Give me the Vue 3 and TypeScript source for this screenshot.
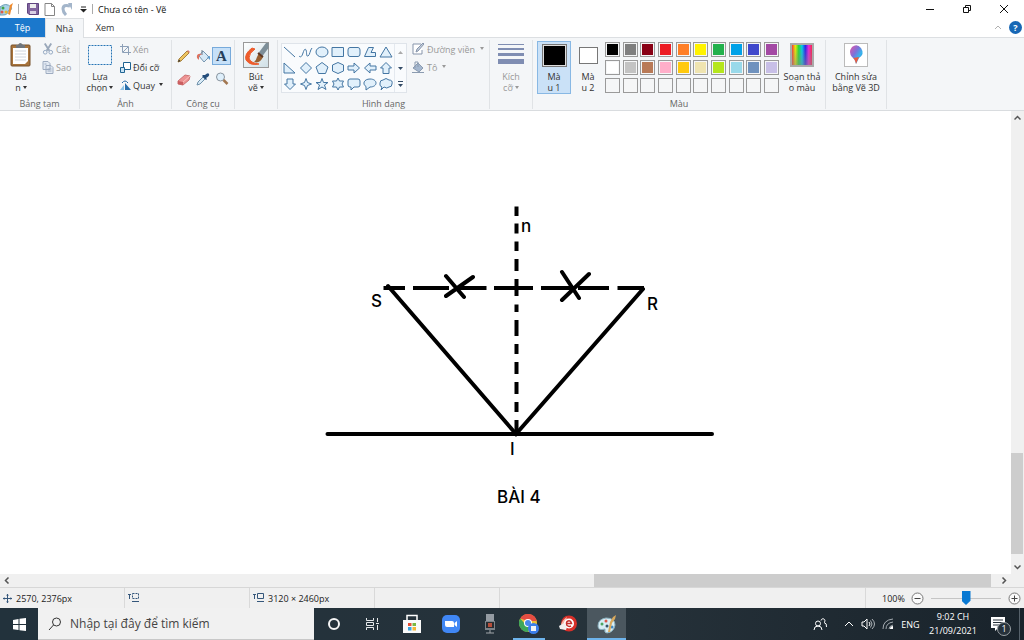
<script setup lang="ts">
import { ref } from 'vue'

const shapes: string[] = [
  'M2 2L13 12',
  'M1 11C3 13 4 11 5 8S7 3 8 5s0 7 2 6 2-6 4-8',
  'M2 7a6 5 0 1 0 12 0a6 5 0 1 0-12 0z',
  'M2 2.500H13.500V11.500H2z',
  'M4 2.500H12Q14 2.500 14 5V9Q14 11.500 12 11.500H4Q2 11.500 2 9V5Q2 2.500 4 2.500z',
  'M2.500 11.500L6.500 2.500H11.500L9 7.500H13.500V11.500z',
  'M8 2L14 12H2z',
  'M2 2L13 12H2z',
  'M8 1.500L13.500 7L8 12.500L2.500 7z',
  'M8 1.500L14 6L11.500 12.500H4.500L2 6z',
  'M8 1.500L13.500 4V10L8 12.500L2.500 10V4z',
  'M2 5H8V2L13.500 7L8 12V9H2z',
  'M14 5H8V2L2.500 7L8 12V9H14z',
  'M8 1.500L13.500 7H11V12.500H5V7H2.500z',
  'M8 12.500L13.500 7H11V2H5V7H2.500z',
  'M8 1.500L9.500 5.500L13.500 7L9.500 8.500L8 12.500L6.500 8.500L2.500 7L6.500 5.500z',
  'M8 1.500L9.500 5.500H14L10.500 8L12 12.500L8 10L4 12.500L5.500 8L2 5.500H6.500z',
  'M8 1L9.500 4H13.500L12 7L13.500 10H9.500L8 13L6.500 10H2.500L4 7L2.500 4H6.500z',
  'M4 2H12Q14 2 14 4V8Q14 10 12 10H8L5 13V10H4Q2 10 2 8V4Q2 2 4 2z',
  'M8 2C16 2 16 10 8 10L4 13V9.500C0 7 2 2 8 2z',
  'M5 3Q8 0 11 3Q15 3 14 7Q14 10 11 10Q9 12 6 10L3 13L4 10Q1 9 2 6Q2 3 5 3z',
]

const palette: string[] = [
  '#000000', '#7f7f7f', '#880015', '#ed1c24', '#ff7f27', '#fff200', '#22b14c', '#00a2e8', '#3f48cc', '#a349a4',
  '#ffffff', '#c3c3c3', '#b97a57', '#ffaec9', '#ffc90e', '#efe4b0', '#b5e61d', '#99d9ea', '#7092be', '#c8bfe7',
  '', '', '', '', '', '', '', '', '', '',
]

const zoomLevel = ref(50)
const query = ref('')
</script>

<template>
  <div class="app">
    <header class="titlebar">
      <svg class="logo" width="14" height="16" viewBox="0 0 14 16"><path d="M0 6Q6 1 11 6Q13 9 8 10Q8 14 3 14H0z" fill="#a9d3e8" stroke="#6a9db5" /><circle cx="3" cy="7" r="1.500" fill="#42a447" /><circle cx="6" cy="11" r="1.500" fill="#e9b72c" /><circle cx="2" cy="11" r="1.500" fill="#df5747" /><path d="M8 13L10 4L13 2L12 5L10 14z" fill="#f08b2e" /></svg>
      <i class="bar"></i>
      <button class="quick" aria-label="Lưu"><svg width="12" height="12" viewBox="0 0 12 12"><path d="M.5.5h11v11H2L.5 10z" fill="#82659f" stroke="#604580" /><path d="M3 1h6v4H3z" fill="#eee" /><path d="M3 8h6v3H3z" fill="#d9d0e4" /></svg></button>
      <button class="quick" aria-label="Mới"><svg width="12" height="13" viewBox="0 0 12 13"><path d="M1 .5h6.500l3 3v9H1z M7.500.5v3h3" fill="#fff" stroke="#858585" /></svg></button>
      <button class="quick" aria-label="Hoàn tác"><svg width="13" height="13" viewBox="0 0 13 13"><path d="M10 3Q3 1 3 6Q3 9 6 12" fill="none" stroke="#a3b5ca" stroke-width="3" /><path d="M8 0h4v7z" fill="#a3b5ca" /></svg></button>
      <button class="more" aria-label="Tùy chỉnh"><svg width="7" height="7" viewBox="0 0 7 7"><path d="M1 1h5" stroke="#222" /><path d="M0 3h7L3.500 6.500z" fill="#222" /></svg></button>
      <i class="bar"></i>
      <h1>Chưa có tên - Vẽ</h1>
      <div class="window">
        <button aria-label="Thu nhỏ"><svg width="10" height="10" viewBox="0 0 10 10"><path d="M1 5.500h8" stroke="#111" /></svg></button>
        <button aria-label="Khôi phục"><svg width="10" height="10" viewBox="0 0 10 10"><path d="M1.500 3.500h5v5h-5z M3.500 3V1.500h5v5H7" fill="none" stroke="#111" /></svg></button>
        <button aria-label="Đóng"><svg width="10" height="10" viewBox="0 0 10 10"><path d="M1 1l8 8M9 1L1 9" stroke="#111" /></svg></button>
      </div>
    </header>

    <nav class="tabs">
      <button class="file">Tệp</button>
      <button class="current">Nhà</button>
      <button>Xem</button>
      <span class="grow"></span>
      <button class="fold" aria-label="Thu gọn dải băng"><svg width="8" height="5" viewBox="0 0 8 5"><path d="M1 4l3-3 3 3" fill="none" stroke="#b0b0b0" /></svg></button>
      <button class="help" aria-label="Trợ giúp">?</button>
    </nav>

    <section class="ribbon">
      <div class="group clipboard">
        <div class="tools">
          <button class="big">
            <svg width="22" height="26" viewBox="0 0 22 26"><rect x="1" y="3" width="19" height="21" rx="1" fill="#a8743c" stroke="#76502a" /><path d="M3 6h15v13l-3 3H3z" fill="#fff" /><path d="M5 9h11M5 12h11M5 15h11M5 18h11" stroke="#cfd6de" /><path d="M6 6V3h2q2-4 5 0h2v3z" fill="#70757b" /></svg>
            <span>Dá<br />n<i class="caret"></i></span>
          </button>
          <div class="stack">
            <button class="row off"><svg width="12" height="12" viewBox="0 0 13 12"><path d="M3 0l5 8M10 0L5 8" stroke="#9aa8ba" stroke-width="2" /><circle cx="3.500" cy="9.500" r="2" fill="none" stroke="#8ea4bf" /><circle cx="9.500" cy="9.500" r="2" fill="none" stroke="#8ea4bf" /></svg>Cắt</button>
            <button class="row off"><svg width="12" height="13" viewBox="0 0 12 13"><path d="M1 .5h5l2 2v6H1z M4 4.500h5l2 2v6H4z" fill="#e3eaf3" stroke="#9eacc1" /><path d="M5.500 8h4M5.500 10h4M2.500 3h2" stroke="#9eacc1" /></svg>Sao</button>
          </div>
        </div>
        <h2>Bảng tạm</h2>
      </div>

      <div class="group image">
        <div class="tools">
          <button class="big select">
            <svg width="26" height="26" viewBox="0 0 26 26"><rect x="1.500" y="3.500" width="23" height="19" fill="#f1f7fd" stroke="#2674b5" stroke-dasharray="2 1" /></svg>
            <span>Lựa<br />chọn<i class="caret"></i></span>
          </button>
          <div class="stack">
            <button class="row off"><svg width="11" height="11" viewBox="0 0 11 11"><path d="M2.500 0v8.500H11M0 2.500h8.500V11M3 8l5-5" fill="none" stroke="#8da0b8" /></svg>Xén</button>
            <button class="row"><svg width="11" height="11" viewBox="0 0 11 11"><path d="M3.500.5h7v7h-7z" fill="#fff" stroke="#1f6493" /><path d="M.5 5.500h4v5h-4z" fill="#c8e2f3" stroke="#1f6493" /></svg>Đổi cỡ</button>
            <button class="row"><svg width="11" height="11" viewBox="0 0 11 11"><path d="M0 10L4 5v5z" fill="#8dc4e8" /><path d="M5 10V3l6 7z" fill="#286eaa" /><path d="M2 3q3-4 6 0" fill="none" stroke="#286eaa" /></svg>Quay<i class="caret"></i></button>
          </div>
        </div>
        <h2>Ảnh</h2>
      </div>

      <div class="group brushes">
        <div class="toolgrid">
          <button aria-label="Bút chì"><svg width="14" height="14" viewBox="0 0 14 14"><path d="M1 13l1-3 8-8 2 2-8 8z" fill="#eec460" stroke="#a9823e" /><path d="M1 13l1-2.500L3.500 12z" fill="#333" /><path d="M10 2l1-1 2 2-1 1z" fill="#d77f6c" /></svg></button>
          <button aria-label="Tô màu"><svg width="14" height="14" viewBox="0 0 14 14"><path d="M7 2l6 6-5 5-5-6z" fill="#d7e9f6" stroke="#7695af" /><path d="M6 6V1" stroke="#6e7d8a" /><path d="M1 9Q0 4 6 5L3 7v4z" fill="#df725f" /><path d="M11 8l3-1v4z" fill="#5d99c9" /></svg></button>
          <button class="picked" aria-label="Văn bản">A</button>
          <button aria-label="Tẩy"><svg width="14" height="13" viewBox="0 0 14 13"><path d="M1 8l7-6 5 1-1 4-6 5-5-1z" fill="#ed9292" stroke="#cc7575" /><path d="M1 8l5 1v3l-5-1z" fill="#c95e60" /><path d="M6 9l7-6" stroke="#f8c1be" /></svg></button>
          <button aria-label="Chọn màu"><svg width="14" height="14" viewBox="0 0 14 14"><path d="M1 13l1-3 5-5 2 2-5 5z" fill="#d8eaf6" stroke="#6f92ab" /><path d="M6 4l4 4 1-1-1-1q4-2 3-4t-4 1L7 3z" fill="#244d7b" /></svg></button>
          <button aria-label="Kính lúp"><svg width="14" height="14" viewBox="0 0 14 14"><circle cx="5.500" cy="5" r="4" fill="#deeffb" stroke="#89949e" /><path d="M8.500 8l4 4" stroke="#a27751" stroke-width="2.500" /></svg></button>
        </div>
        <h2>Công cụ</h2>
      </div>

      <div class="group pen">
        <button class="big">
          <svg width="26" height="26" viewBox="0 0 26 26"><defs><linearGradient id="paper" x1="0" y1="0" x2="1" y2="1"><stop offset="0" stop-color="#fff" /><stop offset="1" stop-color="#cfdfe6" /></linearGradient></defs><rect x=".5" y=".5" width="25" height="25" fill="url(#paper)" stroke="#999" /><path d="M9 6Q1 12 3 18q4 6 13 4-9-1-10-6 0-5 6-9z" fill="#ed5c2c" stroke="#ed5c2c" stroke-linejoin="round" /><path d="M25.500 1v5l-6 8-4-3L23 1z" fill="#7d8e98" /><path d="M20 15q-3 7-9 5 2-1 3-5l2-4z" fill="#99602f" /><path d="M15 11l5 4" stroke="#5e3824" stroke-width="2" /></svg>
          <span>Bút<br />vẽ<i class="caret"></i></span>
        </button>
      </div>

      <div class="group forms">
        <div class="tools">
          <div class="gallery">
            <div class="shapes">
              <button v-for="(shape, i) in shapes" :key="i" :aria-label="'Hình ' + (i + 1)">
                <svg width="16" height="14" viewBox="0 0 16 14"><path :d="shape" :fill="i < 2 ? 'none' : '#e1f0fb'" stroke="#4476a3" /></svg>
              </button>
            </div>
            <div class="pager">
              <button aria-label="Hàng trước"><svg width="5" height="7" viewBox="0 0 5 7"><path d="M0 5l2.500-3L5 5z" fill="#aaa" /></svg></button>
              <button aria-label="Hàng sau"><svg width="5" height="7" viewBox="0 0 5 7"><path d="M0 2l2.500 3L5 2z" fill="#334b66" /></svg></button>
              <button aria-label="Tất cả"><svg width="5" height="7" viewBox="0 0 5 7"><path d="M0 .5h5" stroke="#334b66" /><path d="M0 3l2.500 3L5 3z" fill="#334b66" /></svg></button>
            </div>
          </div>
          <div class="stack">
            <button class="row off"><svg width="12" height="12" viewBox="0 0 12 12"><path d="M9 1H1v10h9V7" fill="#fff" stroke="#8795ab" /><path d="M4 9l1-3 6-6 1 1-6 7z" fill="#c3cedc" stroke="#8795ab" /></svg>Đường viền<i class="caret"></i></button>
            <button class="row off"><svg width="12" height="12" viewBox="0 0 12 12"><path d="M1 7l5-5 5 5-4 4z" fill="#a4b7cf" stroke="#8b9bb0" /><path d="M3 7V1h3v5M0 11.500h12" fill="none" stroke="#8b9bb0" /></svg>Tô<i class="caret"></i></button>
          </div>
        </div>
        <h2>Hình dạng</h2>
      </div>

      <div class="group size">
        <button class="big off">
          <svg width="26" height="26" viewBox="0 0 26 26"><path d="M0 2h26v1H0zM0 6h26v2H0zM0 11h26v3H0zM0 17h26v5H0z" fill="#7f8db2" /></svg>
          <span>Kích<br />cỡ<i class="caret"></i></span>
        </button>
      </div>

      <div class="group colors">
        <div class="tools">
          <button class="well active"><i class="chip black"></i><span>Mà<br />u 1</span></button>
          <button class="well"><i class="chip white"></i><span>Mà<br />u 2</span></button>
          <div class="palette">
            <button v-for="(c, i) in palette" :key="i" :aria-label="'Ô màu ' + (i + 1)" :style="{ backgroundColor: c || '#f5f6f7' }"></button>
          </div>
          <button class="big edit">
            <i class="spectrum"></i>
            <span>Soạn thả<br />o màu</span>
          </button>
        </div>
        <h2>Màu</h2>
      </div>

      <div class="group three">
        <button class="big">
          <svg width="24" height="24" viewBox="0 0 24 24"><defs><linearGradient id="drop" x1="0" y1="0" x2="1" y2="1"><stop offset="0" stop-color="#e954a5" /><stop offset=".4" stop-color="#7d71d9" /><stop offset=".65" stop-color="#36b5ed" /><stop offset="1" stop-color="#3467ca" /></linearGradient></defs><rect x=".5" y=".5" width="23" height="23" fill="#fff" stroke="#bbb" /><path d="M12 21q-1-5-4-7Q4 9 8 4q5-4 9 1 4 6-2 10-1 2-3 6z" fill="url(#drop)" /><path d="M12 21q-1-5-3-6l6-1q-1 2-3 7z" fill="#ec5a40" /></svg>
          <span>Chỉnh sửa<br />bằng Vẽ 3D</span>
        </button>
      </div>
    </section>

    <main class="workspace">
      <svg class="drawing" viewBox="0 111 1011 463" preserveAspectRatio="xMidYMid meet" role="img" aria-label="Bài 4">
        <g fill="none" stroke="#000" stroke-width="4" stroke-linecap="round">
          <path d="M327.500 434H712" />
          <path d="M388 286L516 434L643 289" />
          <path d="M446 276L464 297M446 296L473 277M562 272L579 298M562 300L589 274" />
        </g>
        <path d="M383.500 288H405M413 288H449M456 288H486.500M494 288H533M541 288H574M578 288H609M617.500 288H644" fill="none" stroke="#000" stroke-width="4" />
        <path d="M516.500 206.500V216M516.500 223.500V233.500M516.500 241.500V251M516.500 259V271M516.500 279V296M516.500 304.500V312M516.500 320V336M516.500 344V354M516.500 362V374M516.500 382V394M516.500 402V412M516.500 420V435" fill="none" stroke="#000" stroke-width="4" />
        <g class="labels">
          <text x="521" y="232">n</text>
          <text x="371" y="307">S</text>
          <text x="647" y="310">R</text>
          <text x="510" y="455">I</text>
          <text x="497" y="503">BÀI 4</text>
        </g>
      </svg>
      <div class="vscroll">
        <button aria-label="Cuộn lên"><svg width="7" height="6" viewBox="0 0 7 6"><path d="M.5 4.500l3-3 3 3" fill="none" stroke="#555" stroke-width="1.500" /></svg></button>
        <div class="track"><i class="thumb"></i></div>
        <button aria-label="Cuộn xuống"><svg width="7" height="6" viewBox="0 0 7 6"><path d="M.5 1.500l3 3 3-3" fill="none" stroke="#555" stroke-width="1.500" /></svg></button>
      </div>
    </main>
    <div class="hscroll">
      <button aria-label="Cuộn trái"><svg width="6" height="7" viewBox="0 0 6 7"><path d="M4.500.5l-3 3 3 3" fill="none" stroke="#555" stroke-width="1.500" /></svg></button>
      <div class="track"><i class="thumb"></i></div>
      <button aria-label="Cuộn phải"><svg width="6" height="7" viewBox="0 0 6 7"><path d="M1.500.5l3 3-3 3" fill="none" stroke="#555" stroke-width="1.500" /></svg></button>
    </div>

    <footer class="status">
      <div class="cell"><svg width="9" height="9" viewBox="0 0 9 9"><path d="M4.500 0v9M0 4.500h9" stroke="#35577b" /><path d="M3 1.500L4.500 0 6 1.500zM3 7.500L4.500 9 6 7.500zM1.500 3L0 4.500 1.500 6zM7.500 3L9 4.500 7.500 6z" fill="#35577b" /></svg>2570, 2376px</div>
      <div class="cell"><svg width="11" height="10" viewBox="0 0 11 10"><path d="M1.500 1v5M0 1.500h3M4 8.500h7" fill="none" stroke="#35577b" /><path d="M4.500.5h6v5h-6z" fill="none" stroke="#35577b" stroke-dasharray="2 1" /></svg></div>
      <div class="cell"><svg width="11" height="10" viewBox="0 0 11 10"><path d="M1.500 1v5M0 1.500h3M4 8.500h7M4.500.5h6v5h-6z" fill="none" stroke="#35577b" /></svg>3120 × 2460px</div>
      <div class="cell"></div>
      <div class="cell rest"></div>
      <div class="zoom">
        <label for="zoom">100%</label>
        <button aria-label="Thu nhỏ hình"><svg width="13" height="13" viewBox="0 0 13 13"><circle cx="6.500" cy="6.500" r="5.500" fill="#fafafa" stroke="#777" /><path d="M3.500 6.500h6" stroke="#444" /></svg></button>
        <input id="zoom" v-model.number="zoomLevel" type="range" min="0" max="100" />
        <button aria-label="Phóng to hình"><svg width="13" height="13" viewBox="0 0 13 13"><circle cx="6.500" cy="6.500" r="5.500" fill="#fafafa" stroke="#777" /><path d="M3.500 6.500h6M6.500 3.500v6" stroke="#444" /></svg></button>
      </div>
    </footer>

    <footer class="taskbar">
      <button class="start" aria-label="Bắt đầu"><svg width="13" height="13" viewBox="0 0 13 13"><path d="M0 2l5.500-1v5H0zM6.500.8L13 0v6H6.500zM0 7h5.500v5L0 11.200zM6.500 7H13v6l-6.500-.8z" fill="#fff" /></svg></button>
      <label class="search">
        <svg width="14" height="14" viewBox="0 0 14 14"><circle cx="8.500" cy="5" r="4" fill="none" stroke="#333" /><path d="M5.500 8L1 13" stroke="#333" /></svg>
        <input v-model="query" type="text" placeholder="Nhập tại đây để tìm kiếm" aria-label="Tìm kiếm" />
      </label>
      <button class="app-btn" aria-label="Cortana"><svg width="14" height="14" viewBox="0 0 14 14"><circle cx="7" cy="7" r="5" fill="none" stroke="#f5f5f5" stroke-width="2" /></svg></button>
      <button class="app-btn" aria-label="Dạng xem tác vụ"><svg width="15" height="14" viewBox="0 0 15 14"><path d="M1.500 1v2.500h7V1M1.500 13v-2.500h7V13M1.500 5.500h7v3h-7zM12.500 1v4M12.500 8v5M11 6.500h3" fill="none" stroke="#e5e8ea" /></svg></button>
      <button class="app-btn" aria-label="Store"><svg width="20" height="20" viewBox="0 0 20 20"><path d="M5 7V1.500h10V7" fill="none" stroke="#fff" stroke-width="1.500" /><path d="M1 6h18v13H1z" fill="#fafafa" /><path d="M6 9h3.500v3H6z" fill="#e74d32" /><path d="M10.500 9H14v3h-3.500z" fill="#7bb840" /><path d="M6 13h3.500v3.500H6z" fill="#39a4df" /><path d="M10.500 13H14v3.500h-3.500z" fill="#f4b736" /></svg></button>
      <button class="app-btn" aria-label="Zoom"><svg width="18" height="18" viewBox="0 0 18 18"><rect width="18" height="18" rx="5" fill="#4087f5" /><path d="M3 6h7q2 0 2 2v4H5q-2 0-2-2zM12.500 8L15 6v6l-2.500-2z" fill="#fff" /></svg></button>
      <button class="app-btn" aria-label="Ghi âm"><svg width="14" height="20" viewBox="0 0 14 20"><path d="M3 0h8v8H3z" fill="#949ba2" /><path d="M2 7h10v9H2z" fill="#7c8389" /><path d="M3 8h8v6H3z" fill="#292c30" /><path d="M5 9h4v4H5z" fill="#b64e3a" /><path d="M7 16v3M3 19h8" stroke="#a2a6aa" /></svg></button>
      <button class="app-btn open" aria-label="Chrome"><svg width="20" height="20" viewBox="0 0 20 20"><circle cx="9" cy="9" r="9" fill="#eabf38" /><path d="M1.200 4.500A9 9 0 0 1 17.800 7H9z" fill="#e54d42" /><path d="M1.200 4.500A9 9 0 0 0 9 18l2-6-5-2z" fill="#3da75a" /><circle cx="9" cy="9" r="4" fill="#fff" /><circle cx="9" cy="9" r="3" fill="#4789eb" /><circle cx="14.500" cy="14.500" r="5.500" fill="#3c7eea" /><path d="M12 12h5v5h-5z" fill="#f2f4f6" /></svg></button>
      <button class="app-btn" aria-label="UniKey"><svg width="18" height="18" viewBox="0 0 18 18"><circle cx="10" cy="8.500" r="8" fill="#d9302a" /><path d="M8 2Q3 5 2 10l4-1z" fill="#f6b7a8" /><circle cx="10" cy="8.500" r="5" fill="#fff" /><path d="M7.500 8.500h5q-1-3.500-3.500-2.500t-1 4.500q2 1.500 4 .5" fill="none" stroke="#c52e2b" stroke-width="1.500" /><path d="M0 11l5-3 3 4-1 3-6-1z" fill="#f2eeee" /></svg></button>
      <button class="app-btn open focused" aria-label="Vẽ"><svg width="20" height="20" viewBox="0 0 20 20"><path d="M1 12Q1 5 9 4q9 0 9 7-1 7-8 8-3 0-2-4-7 2-7-3z" fill="#d7edf5" stroke="#8bb1bf" /><circle cx="5" cy="10" r="1.500" fill="#4da562" /><circle cx="9" cy="7" r="1.500" fill="#db584a" /><circle cx="10" cy="12" r="1.500" fill="#35556b" /><circle cx="15" cy="13" r="1.500" fill="#4089c4" /><path d="M11 18l2-10 3-5 3-2-1 4-3 4-2 9z" fill="#d9a95d" /></svg></button>
      <span class="grow"></span>
      <button class="people" aria-label="Mọi người"><svg width="14" height="14" viewBox="0 0 14 14"><circle cx="5" cy="6.500" r="2.500" fill="none" stroke="#fff" /><path d="M1 13q0-4 4-4t4 4M8 3.500a2 2 0 1 1 3 2Q14 6 13.500 10" fill="none" stroke="#fff" /></svg></button>
      <button class="expand" aria-label="Biểu tượng ẩn"><svg width="10" height="6" viewBox="0 0 10 6"><path d="M1 5l4-4 4 4" fill="none" stroke="#fff" /></svg></button>
      <button class="tray" aria-label="Âm lượng"><svg width="14" height="12" viewBox="0 0 14 12"><path d="M1 4h2l3-3v10L3 8H1zM8 4q2 2 0 4" fill="none" stroke="#fff" /><path d="M9.500 2.500q3 3.500 0 7M11 1q5 5 0 10" fill="none" stroke="#aeb4b8" /></svg></button>
      <button class="tray" aria-label="Mạng"><svg width="12" height="12" viewBox="0 0 12 12"><path d="M1 11Q1 2 11 1M4 11Q4 5 11 4M7 11q0-3 4-4" fill="none" stroke="#a4abb0" /><path d="M8 11q0-3 3-3v3z" fill="#fff" /></svg></button>
      <button class="lang">ENG</button>
      <button class="clock">9:02 CH<br />21/09/2021</button>
      <button class="notes" aria-label="1 thông báo"><svg width="14" height="14" viewBox="0 0 14 14"><path d="M0 0h14v11H7l-3 3v-3H0z" fill="#fff" /><path d="M2 3h10M2 5.500h10M2 8h7" stroke="#26313a" /></svg><b>1</b></button>
      <i class="desktop"></i>
    </footer>
  </div>
</template>

<style>
body { margin: 0; }
</style>

<style scoped>
* { box-sizing: border-box; }
.app { display: flex; flex-direction: column; min-height: 100vh; background: #fff; color: #333; font: 9px/11px "Open Sans", "Noto Sans", sans-serif; }
button { border: 0; padding: 0; margin: 0; background: none; color: inherit; font: inherit; display: flex; align-items: center; justify-content: center; }
svg { display: block; flex: none; }
h1, h2 { margin: 0; font: inherit; }
i { font-style: normal; }
.grow { flex: 1; }

.titlebar { display: flex; align-items: center; height: 18px; padding-right: 2px; }
.logo { margin-right: 4px; }
.bar { width: 1px; height: 10px; background: #aaa; }
.quick { width: 17px; }
.bar + .quick { margin-left: 5px; }
.more { width: 16px; margin-right: 1px; }
h1 { flex: 1; margin-left: 5px; color: #111; white-space: nowrap; }
.window { display: flex; }
.window button { width: 37px; height: 17px; }

.tabs { display: flex; align-items: stretch; height: 20px; border-bottom: 1px solid #dcdfe2; }
.tabs button { width: 42px; }
.tabs .file { width: 45px; background: #1b78cc; color: #fff; }
.tabs .current { width: 39px; margin-bottom: -1px; background: #f4f6f8; border: 1px solid #dcdfe2; border-bottom: 0; }
.tabs .fold { width: 20px; }
.tabs .help { width: 13px; height: 13px; margin: 3px 2px 0 1px; border-radius: 50%; background: #1767b5; color: #fff; font-weight: 700; }

.ribbon { display: flex; height: 73px; padding-top: 2px; background: #f4f6f8; border-bottom: 1px solid #d9dcdf; }
.group { display: flex; flex-direction: column; justify-content: space-between; height: 69px; border-right: 1px solid #e0e3e6; }
.group h2 { color: #666; text-align: center; }
.tools { display: flex; align-items: flex-start; }
.clipboard { width: 80px; }
.image { width: 92px; }
.brushes { width: 63px; }
.pen { width: 43px; }
.forms { width: 212px; }
.size { width: 43px; }
.colors { width: 293px; }
.three { width: 61px; }
.big { flex-direction: column; justify-content: flex-start; padding-top: 2px; }
.big > svg { height: 26px; margin-bottom: 3px; }
.big > span { white-space: nowrap; }
.clipboard .big { width: 42px; }
.select { width: 40px; }
.group.pen .big, .group.size .big, .group.three .big { width: 100%; }
.off { color: #999; }
.caret { display: inline-block; margin: 0 0 2px 2px; border: 2px solid transparent; border-top: 3px solid currentColor; border-bottom: 0; }
.stack { display: flex; flex-direction: column; align-items: flex-start; }
.row { height: 18px; gap: 2px; white-space: nowrap; }
.toolgrid { display: grid; grid-template-columns: repeat(3, 19px); grid-auto-rows: 20px; gap: 3px 0; padding: 7px 0 0 2px; }
.toolgrid button { height: 18px; }
.toolgrid .picked { border: 1px solid #77aadb; background: #c6e0f8; color: #243f5d; font: bold 15px/18px "Liberation Serif", serif; }
.gallery { display: flex; height: 50px; margin: 3px 5px 0 3px; border: 1px solid #dfe4ea; background: #f9fbfd; }
.shapes { display: grid; grid-template-columns: repeat(7, 16px); grid-auto-rows: 16px; }
.pager { display: grid; grid-auto-rows: 16px; width: 12px; border-left: 1px solid #e4e9ef; }
.forms .row { gap: 3px; }

.well { flex-direction: column; justify-content: flex-start; width: 34px; height: 53px; border: 1px solid transparent; padding-top: 2px; gap: 4px; }
.colors .tools { padding: 1px 0 0 4px; }
.well.active { border-color: #88b8e4; background: #cae1f7; }
.well .chip { width: 25px; height: 25px; border: 1px solid #777; outline: 1px solid #ddd; outline-offset: -2px; }
.chip.black { background: #000; }
.well .chip.white { background: #fff; width: 19px; height: 19px; margin: 3px 0; outline: 0; }
.palette { display: grid; grid-template-columns: repeat(10, 15px); grid-auto-rows: 15px; row-gap: 3px; justify-content: space-between; width: 174px; padding-top: 1px; }
.palette button { border: 1px solid #9a9a9a; box-shadow: inset 0 0 0 1px #f5f6f7; }
.edit { flex: 1; }
.spectrum { width: 24px; height: 24px; margin-bottom: 4px; border: 2px solid #aaa; background: linear-gradient(to bottom, transparent, #8888), linear-gradient(to right, #f33, #ee0, #2d3, #0ce, #22e, #e2d, #f24); }
.three .big > svg { height: 24px; margin: 1px 0 4px; }

.workspace { flex: 1; display: flex; min-height: 463px; background: #fff; }
.drawing { flex: 1 1 0; min-width: 0; height: auto; }
.labels { font: 500 17px Inter, sans-serif; fill: #000; }
.vscroll { display: flex; flex-direction: column; width: 13px; background: #f0f0f0; }
.vscroll button { height: 14px; }
.track { display: flex; flex: 1; }
.vscroll .track { flex-direction: column; padding-right: 1px; }
.track::before { content: ""; flex: 328; }
.track::after { content: ""; flex: 6; }
.thumb { flex: 101; background: #cdcdcd; }
.hscroll { display: flex; height: 13px; padding-right: 13px; background: #f0f0f0; }
.hscroll button { width: 14px; }
.hscroll .track::before { flex: 580; }
.hscroll .track .thumb { flex: 397; }

.status { display: flex; height: 21px; background: #f0f0f0; border-top: 1px solid #d7d7d7; color: #222; }
.cell { display: flex; align-items: center; gap: 4px; width: 125px; padding-left: 3px; border-right: 1px solid #d9d9d9; }
.rest { flex: 1; }
.zoom { display: flex; align-items: center; width: 158px; padding-left: 16px; padding-right: 3px; }
.zoom label { flex: 1; }
.zoom input { appearance: none; width: 70px; height: 15px; margin: 0 7px; background: linear-gradient(#c5c5c5, #c5c5c5) center / 100% 1px no-repeat; }
.zoom input::-webkit-slider-thumb { appearance: none; width: 9px; height: 14px; background: #0878d2; clip-path: polygon(0 0, 100% 0, 100% 70%, 50% 100%, 0 70%); }

.taskbar { display: flex; align-items: stretch; height: 32px; background: linear-gradient(to right, #22323c, #26323a 60%, #19232b); color: #fff; }
.start { width: 38px; }
.search { display: flex; align-items: center; gap: 8px; width: 276px; padding-left: 10px; background: #f1f1f1; border-bottom: 1px solid #c8c8c8; }
.search input { flex: 1; min-width: 0; border: 0; padding: 0; background: none; color: #333; font: 12px/16px "Open Sans", "Noto Sans", sans-serif; }
.search input::placeholder { color: #444; opacity: 1; }
.app-btn { width: 39px; }
.app-btn.open { background: linear-gradient(#6eb4ec, #6eb4ec) bottom / 32px 2px no-repeat; }
.app-btn.focused { background: linear-gradient(#6eb4ec, #6eb4ec) bottom / 100% 2px no-repeat #4b575f; }
.people { width: 40px; }
.expand { width: 18px; }
.tray { width: 20px; }
.lang { width: 25px; }
.clock { width: 60px; text-align: center; line-height: 14px; white-space: nowrap; }
.notes { position: relative; width: 36px; padding-right: 6px; }
.notes b { position: absolute; right: 8px; bottom: 4px; width: 14px; height: 14px; border: 1px solid #9ba1a5; border-radius: 50%; background: #26313a; font: 9px/12px "Open Sans", sans-serif; text-align: center; }
.desktop { width: 5px; border-left: 1px solid #56616a; }
</style>
